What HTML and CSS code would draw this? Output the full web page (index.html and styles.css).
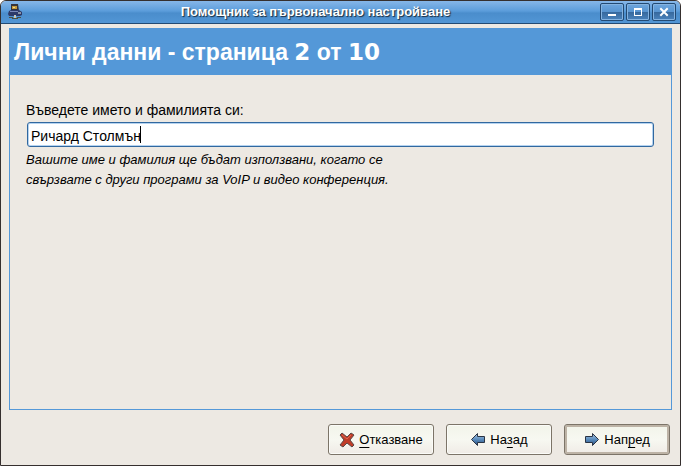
FILE: index.html
```html
<!DOCTYPE html>
<html lang="bg">
<head>
    <meta charset="UTF-8">
    <meta name="viewport" content="width=device-width, initial-scale=1.0">
    <title>Помощник за първоначално настройване</title>
    <link rel="stylesheet" href="styles.css">
</head>
<body>
    <div class="window">
        <header class="titlebar">
            <svg class="app-icon" width="16" height="16" viewBox="0 0 16 16">
                <path d="M4 0h7l1 7H4z" fill="#34343c"/>
                <path d="M5 2h5v3H5z" fill="#c49a3c"/>
                <path d="M6 3h2v1H6z" fill="#f0d890"/>
                <path d="M2 7l2-1h8l3 2v3l-2 1H2l-1-2z" fill="#2d3a68"/>
                <path d="M3 7h8v1H3z" fill="#7888b8"/>
                <path d="M11 8h3v2h-3z" fill="#8a94a8"/>
                <path d="M7 11h2v3H7z" fill="#c8c8b8"/>
                <path d="M2 13h4v1H2zM10 13h4v1h-4zM5 14h6v1H5z" fill="#4c5040"/>
            </svg>
            <h1 class="window-title">Помощник за първоначално настройване</h1>
            <div class="window-controls">
                <button type="button" class="control" aria-label="Минимизиране">
                    <svg width="10" height="10" viewBox="0 0 10 10"><path d="M1 7h8v2H1z" fill="#fff"/></svg>
                </button>
                <button type="button" class="control" aria-label="Максимизиране">
                    <svg width="10" height="10" viewBox="0 0 10 10"><path d="M1 1h8v8H1zM2 3v5h6V3z" fill="#fff" fill-rule="evenodd"/></svg>
                </button>
                <button type="button" class="control" aria-label="Затваряне">
                    <svg width="10" height="10" viewBox="0 0 10 10"><path d="M2 2l6 6M8 2l-6 6" stroke="#fff" stroke-width="2" stroke-linecap="square"/></svg>
                </button>
            </div>
        </header>

        <form class="assistant">
            <section class="page">
                <h2 class="page-title">Лични данни - страница <span class="num">2</span> от <span class="num">10</span></h2>
                <div class="page-body">
                    <label for="full-name">Въведете името и фамилията си:</label>
                    <div class="field">
                        <input type="text" id="full-name" value="Ричард Столмън" aria-describedby="name-hint">
                        <span class="caret"></span>
                    </div>
                    <p class="hint" id="name-hint">Вашите име и фамилия ще бъдат използвани, когато се<br>свързвате с други програми за VoIP и видео конференция.</p>
                </div>
            </section>

            <div class="actions">
                <button type="button" class="btn">
                    <svg width="16" height="16" viewBox="0 0 16 16">
                        <path d="M1 3l2-2 5 4 4-4 3 2-4 5 4 5-2 2-5-4-4 4-3-2 4-5z" fill="#c03c28" stroke="#5a4a48" stroke-linejoin="round"/>
                        <path d="M3 3l5 4 4-4" fill="none" stroke="#dc6850"/>
                    </svg>
                    <span><u>О</u>тказване</span>
                </button>
                <button type="button" class="btn">
                    <svg width="16" height="16" viewBox="0 0 16 16">
                        <defs>
                            <linearGradient id="arrow" x1="0" y1="0" x2="0" y2="1">
                                <stop offset="0" stop-color="#a4c4e2"/>
                                <stop offset="0.5" stop-color="#5a8cbc"/>
                                <stop offset="1" stop-color="#284e80"/>
                            </linearGradient>
                        </defs>
                        <path d="M1.500 7.500l6-6v3h7v6h-7v3z" fill="url(#arrow)" stroke="#2a3444" stroke-linejoin="round"/>
                    </svg>
                    <span>На<u>з</u>ад</span>
                </button>
                <button type="submit" class="btn btn-default">
                    <svg width="16" height="16" viewBox="0 0 16 16">
                        <path d="M14.500 7.500l-6-6v3h-7v6h7v3z" fill="url(#arrow)" stroke="#2a3444" stroke-linejoin="round"/>
                    </svg>
                    <span>Нап<u>р</u>ед</span>
                </button>
            </div>
        </form>
    </div>
</body>
</html>
```
FILE: styles.css
```css
* {
    box-sizing: border-box;
}
body {
    margin: 0;
    background-color: #fff;
    color: #000;
    font-family: "Liberation Sans", Arial, sans-serif;
    font-size: 13px;
}
h1, h2, p {
    margin: 0;
}
.window {
    display: flex;
    flex-direction: column;
    min-height: 100vh;
    border: 1px solid #352f2e;
    border-radius: 6px 6px 0 0;
    background-color: #ede9e3;
    overflow: hidden;
}
.titlebar {
    display: flex;
    align-items: center;
    height: 23px;
    padding: 0 4px 0 6px;
    border-bottom: 1px solid #234a73;
    background: linear-gradient(#86b6e8, #5c9ddb 45%, #4a8dcc 55%, #5296d5);
}
.window-title {
    flex: 1;
    padding-left: 8px;
    color: #fff;
    font-size: 13px;
    line-height: 20px;
    text-align: center;
    text-shadow: 1px 1px 1px #1c2c3c;
}
.window-controls {
    display: flex;
    gap: 2px;
}
.control {
    display: flex;
    align-items: center;
    justify-content: center;
    width: 24px;
    height: 18px;
    padding: 0;
    border: 1px solid #234a73;
    border-radius: 2px;
    background: linear-gradient(#6ea6de, #5794d0 50%, #36689c 50%, #4a83bd);
    box-shadow: inset 0 0 0 1px #85b3e0;
}
.assistant {
    display: flex;
    flex: 1;
    flex-direction: column;
    gap: 14px;
    padding: 4px 8px 10px;
}
.page {
    flex: 1;
    border: 1px solid #5498d8;
}
.page-title {
    padding: 8px 4px;
    background-color: #5498d8;
    color: #fff;
    font-size: 23px;
    line-height: 30px;
}
.num {
    font-family: "DejaVu Sans", sans-serif;
}
.page-body {
    display: flex;
    flex-direction: column;
    padding: 25px 16px;
}
.page-body label {
    font-size: 14px;
    line-height: 20px;
}
.field {
    position: relative;
    margin: 2px 1px 3px;
}
.field input {
    display: block;
    width: 100%;
    height: 25px;
    padding: 3px 3px 0;
    border: 1px solid #31689f;
    border-radius: 3px;
    background-color: #fff;
    box-shadow: inset 0 0 0 1px #b5d3f0;
    color: #000;
    font: inherit;
    font-size: 14px;
    outline: none;
}
/* text cursor after the typed name */
.caret {
    position: absolute;
    top: 4px;
    left: 113px;
    width: 1px;
    height: 17px;
    background-color: #000;
}
.hint {
    font-style: italic;
    line-height: 20px;
}
.actions {
    display: flex;
    justify-content: flex-end;
    gap: 12px;
    padding-right: 2px;
}
.btn {
    display: flex;
    align-items: center;
    justify-content: center;
    gap: 4px;
    width: 106px;
    height: 31px;
    padding: 0;
    border: 1px solid #7c7468;
    border-radius: 3px;
    background: linear-gradient(#f2f4ea, #f7f8f1 50%, #f0ebe6);
    box-shadow: inset 0 0 0 1px #fbfbf8;
    color: #000;
    font: inherit;
}
.btn-default {
    box-shadow: inset 0 0 0 2px #bdb3a6;
}
.btn u {
    text-underline-offset: 3px;
    text-decoration-skip-ink: none;
}
```
